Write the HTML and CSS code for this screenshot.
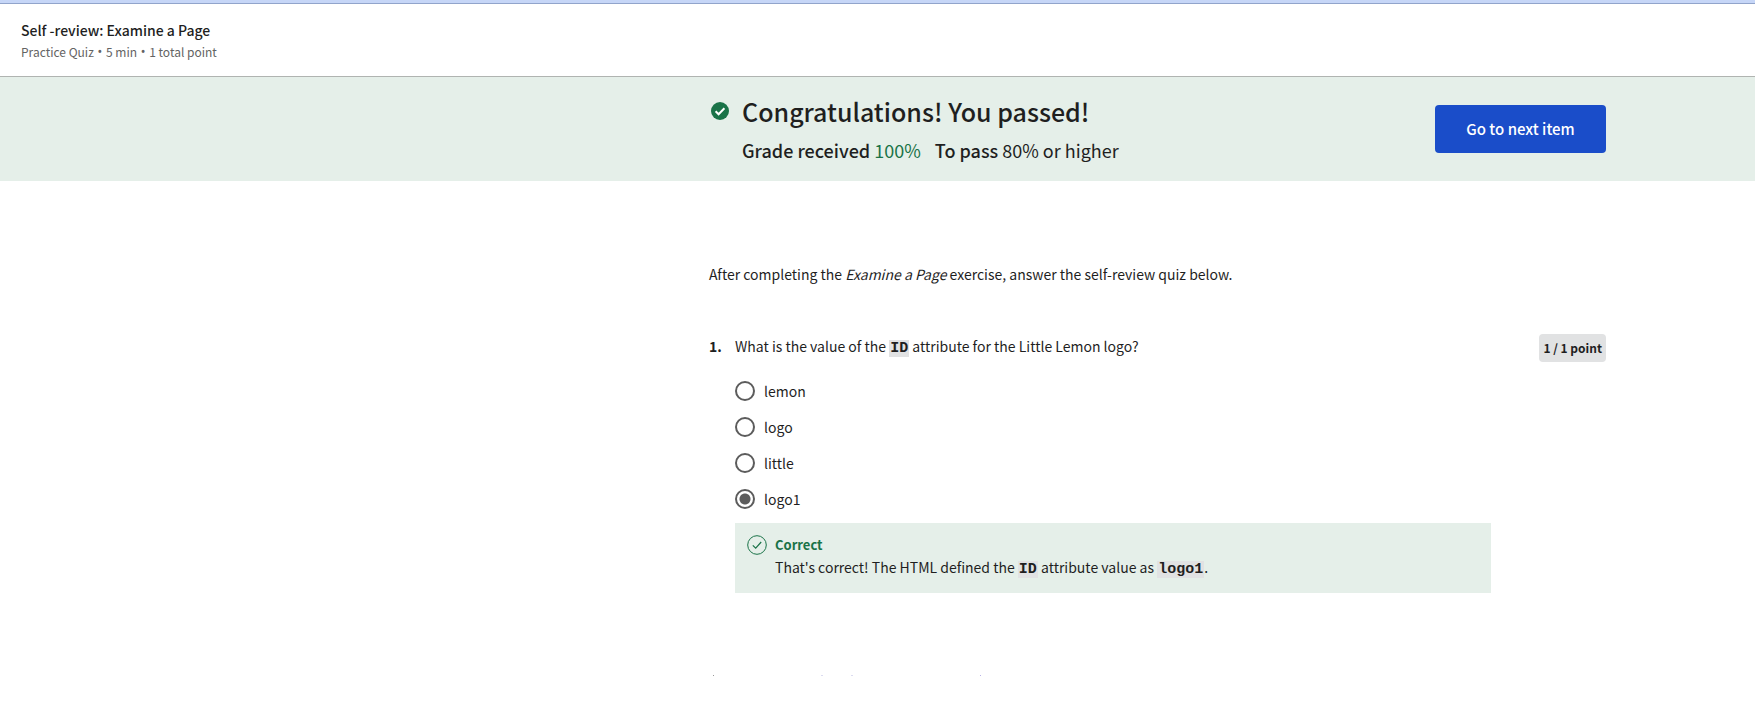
FILE: index.html
```html
<!DOCTYPE html>
<html lang="en">
<head>
<meta charset="utf-8">
<title>Self -review: Examine a Page</title>
<meta name="viewport" content="width=device-width, initial-scale=1">
<link rel="stylesheet" href="styles.css">
</head>
<body>
<div class="top-strip"></div>
<header class="header">
  <h1 class="header-title">Self -review: Examine a Page</h1>
  <p class="header-meta">Practice Quiz <span class="bullet">•</span> 5 min <span class="bullet">•</span> 1 total point</p>
</header>
<section class="banner">
  <div class="column banner-row">
    <svg class="banner-icon" viewBox="0 0 18 18" aria-hidden="true">
      <circle cx="9" cy="9" r="9" fill="#1a7348"/>
      <path d="M4.6 9.2 7.6 12.2 13.4 6.2" fill="none" stroke="#fff" stroke-width="2"/>
    </svg>
    <div class="banner-text">
      <h2 class="banner-title">Congratulations! You passed!</h2>
      <p class="grades">
        <span><b>Grade received</b> <span class="score">100%</span></span>
        <span><b>To pass</b> 80% or higher</span>
      </p>
    </div>
    <button class="next" type="button">Go to next item</button>
  </div>
</section>
<main class="column">
  <p class="intro">After completing the <em>Examine a Page</em> exercise, answer the self-review quiz below.</p>
  <div class="question">
    <span class="number">1.</span>
    <fieldset class="question-body" aria-labelledby="prompt">
      <p class="prompt" id="prompt">What is the value of the <code>ID</code> attribute for the Little Lemon logo?</p>
      <div class="options">
        <label class="option"><input type="radio" name="answer">lemon</label>
        <label class="option"><input type="radio" name="answer">logo</label>
        <label class="option"><input type="radio" name="answer">little</label>
        <label class="option"><input type="radio" name="answer" checked>logo1</label>
      </div>
      <div class="feedback">
        <svg class="feedback-icon" viewBox="0 0 20 20" aria-hidden="true" fill="none" stroke="#1a7348">
          <circle cx="10" cy="10" r="9.3"/>
          <path d="M5.8 10.4 8.7 13.2 14.2 7" stroke-width="1.2"/>
        </svg>
        <div>
          <p class="verdict">Correct</p>
          <p class="explanation">That's correct! The HTML defined the <code>ID</code> attribute value as <code>logo1</code>.</p>
        </div>
      </div>
    </fieldset>
    <span class="points">1 / 1 point</span>
  </div>
  <svg class="specks" width="290" height="1" aria-hidden="true">
    <path d="M4 0h1v1h-1z" fill="#999"/>
    <path d="M112 0h2v1h-2zM142 0h2v1h-2z" fill="#dcdcf0"/>
    <path d="M271 0h1v1h-1z" fill="#b9b4e8"/>
  </svg>
</main>
</body>
</html>
```
FILE: styles.css
```css
* { box-sizing: border-box; }
body {
  margin: 0;
  background: #fff;
  color: #1f1f1f;
  font: 14px/24px "Source Sans Pro", "Noto Sans CJK SC", "Noto Sans", sans-serif;
}
h1, h2, p { margin: 0; }
.top-strip {
  height: 4px;
  background: #c6d6f7;
  border-bottom: 1px solid #91a4cb;
}
.header {
  padding: 16px 21px 12px;
  border-bottom: 1px solid #b0b4b1;
}
.header-title { font-size: 14px; line-height: 20px; font-weight: 500; }
.header-meta { font-size: 12px; line-height: 23px; color: #636363; }
.bullet { padding: 0 1px; font-family: Roboto, sans-serif; font-size: 14px; }
.column {
  max-width: 897px;
  margin: 0 149px 0 auto;
}
.banner { background: #e5efe9; }
.banner-row {
  display: flex;
  align-items: center;
  padding: 16px 0;
}
.banner-icon {
  width: 18px;
  height: 18px;
  margin: 9px 13px 0 2px;
  align-self: flex-start;
  flex: none;
}
.banner-text { flex: 1; }
.banner-title { font-size: 25px; line-height: 36px; font-weight: 500; }
.grades {
  display: flex;
  gap: 14px;
  padding-top: 6px;
  font-size: 18px;
  line-height: 30px;
}
.grades b { font-weight: 500; }
.score { color: #1a7348; }
.next {
  width: 171px;
  height: 48px;
  border: 0;
  border-radius: 4px;
  background: #1a4dc9;
  color: #fff;
  font: inherit;
  font-size: 15px;
  font-weight: 500;
}
.intro { padding-top: 81px; }
.question {
  display: flex;
  align-items: flex-start;
  padding-top: 48px;
}
.number { width: 26px; font-weight: 700; flex: none; }
.question-body {
  flex: 1;
  min-width: 0;
  margin: 0;
  padding: 0;
  border: 0;
}
code {
  padding: 0 1px;
  background: #e1e2e3;
  font: bold 15px/17px "Liberation Mono", monospace;
}
.options { padding-top: 15px; }
.option {
  display: flex;
  align-items: center;
  gap: 9px;
  height: 36px;
}
.option input {
  appearance: none;
  width: 20px;
  height: 20px;
  margin: 0;
  border: 2px solid #5c5c5c;
  border-radius: 50%;
}
.option input:checked { background: radial-gradient(circle, #5c5c5c 5px, transparent 6px); }
.feedback {
  display: flex;
  gap: 8px;
  margin-top: 6px;
  padding: 12px 12px 14px;
  background: #e5efe9;
}
.feedback-icon { width: 20px; height: 20px; flex: none; }
.verdict {
  font-size: 13px;
  line-height: 20px;
  font-weight: 700;
  color: #1a7348;
}
.points {
  margin-left: 48px;
  padding: 2px 4px;
  border-radius: 4px;
  background: #e1e2e3;
  font-size: 12px;
  line-height: 24px;
  font-weight: 700;
}
.specks { display: block; margin-top: 82px; }
```
